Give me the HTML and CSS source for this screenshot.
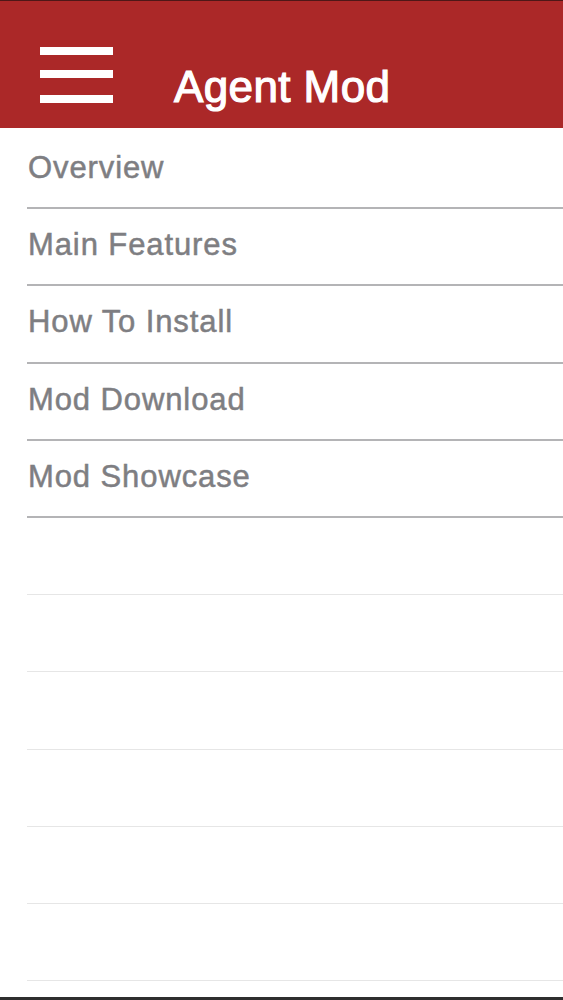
FILE: index.html
```html
<!DOCTYPE html>
<html lang="en">
<head>
    <meta charset="UTF-8">
    <title>Agent Mod</title>
    <link rel="stylesheet" href="styles.css">
</head>
<body>
<div class="page">
    <header class="topbar">
        <div class="menu-btn">
            <svg width="73" height="56" viewBox="0 0 73 56">
                <rect x="0" y="0" width="73" height="8" fill="#fff"/>
                <rect x="0" y="23" width="73" height="8" fill="#fff"/>
                <rect x="0" y="48" width="73" height="8" fill="#fff"/>
            </svg>
        </div>
        <h1 class="title">Agent Mod</h1>
    </header>
    <ul class="nav">
        <li class="row"><span class="label">Overview</span></li>
        <li class="row"><span class="label">Main Features</span></li>
        <li class="row"><span class="label">How To Install</span></li>
        <li class="row"><span class="label">Mod Download</span></li>
        <li class="row"><span class="label">Mod Showcase</span></li>
        <li class="row empty"></li>
        <li class="row empty"></li>
        <li class="row empty"></li>
        <li class="row empty"></li>
        <li class="row empty"></li>
        <li class="row empty"></li>
    </ul>
    <div class="bottom-bar"></div>
</div>
</body>
</html>
```

FILE: styles.css
```css
*{margin:0;padding:0;box-sizing:border-box}
html,body{height:100%;overflow:hidden}
body{background:#fff;font-family:"Liberation Sans",Arial,sans-serif}
ul{list-style:none}
.page{
    height:1000px;
    display:flex;
    flex-direction:column;
}
/*顶部栏*/
.topbar{
    height:128px;
    flex:none;
    background:#ab2828;
    border-top:1px solid #4e1717;
    display:flex;
    align-items:flex-start;
}
.menu-btn{margin:46px 0 0 40px;line-height:0}
.title{
    margin:64px 0 0 61px;
    color:#fff;
    font-size:44px;
    line-height:44px;
    font-weight:normal;
    letter-spacing:0.4px;
    -webkit-text-stroke:1.2px #fff;
}
/*菜单*/
.nav{
    flex:1;
    padding-top:4px;
    padding-left:27px;
}
.row{
    height:77.2px;
    border-bottom:2px solid #b4b4b6;
    padding-top:21px;
}
.row.empty{border-bottom:1px solid #e6e6e6}
.label{
    display:block;
    color:#7e7e82;
    font-size:31px;
    line-height:30px;
    letter-spacing:0.9px;
    padding-left:1px;
    -webkit-text-stroke:0.5px #7e7e82;
}
.bottom-bar{height:3px;flex:none;background:#2e2e2e}
```
